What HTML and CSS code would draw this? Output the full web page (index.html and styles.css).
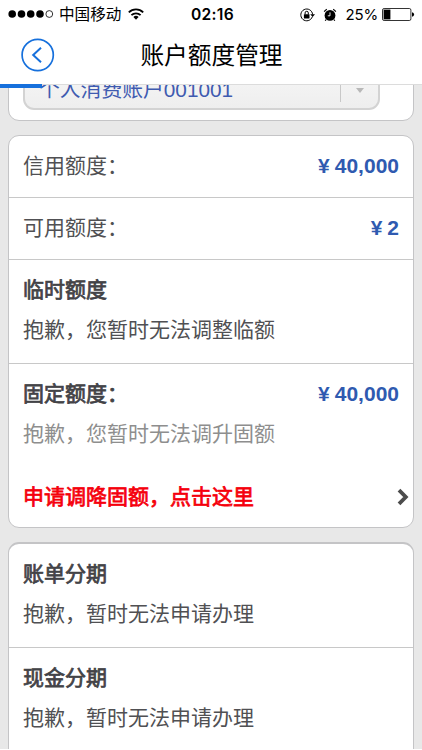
FILE: index.html
```html
<!DOCTYPE html>
<html lang="zh-CN">
<head>
<meta charset="utf-8">
<title>账户额度管理</title>
<link rel="stylesheet" href="styles.css">
</head>
<body>
<div class="screen">
  <header class="top">
    <div class="status">
      <div class="status-left">
        <svg class="signal" width="46" height="10" viewBox="0 0 46 10"><g fill="#000"><circle cx="4.2" cy="5" r="3.8"/><circle cx="13.5" cy="5" r="3.8"/><circle cx="22.7" cy="5" r="3.8"/><circle cx="32" cy="5" r="3.8"/></g><circle cx="41.3" cy="5" r="3.4" fill="none" stroke="#000" stroke-width=".8"/></svg>
        <span class="carrier">中国移动</span>
        <svg class="wifi" width="16" height="12" viewBox="0 0 16 12"><g fill="none" stroke="#000" stroke-width="1.8"><path d="M.8 4.4a10.2 10.2 0 0 1 14.4 0"/><path d="M3.4 7.2a6.5 6.5 0 0 1 9.2 0"/></g><path d="M5.4 9.1a3.7 3.7 0 0 1 5.2 0L8 11.8z"/></svg>
      </div>
      <span class="time">02:16</span>
      <div class="status-right">
        <svg width="15" height="14" viewBox="0 0 15 14"><path d="M12.3 8.8A5.9 5.9 0 1 1 12.6 6.5" fill="none" stroke="#000" stroke-width="1"/><path d="M10.2 6.2h4.8l-2.4 2.9z"/><rect x="3.9" y="6.2" width="5.6" height="4.2" rx=".4"/><path d="M5.1 6.4V4.9a1.6 1.6 0 0 1 3.2 0v1.5" fill="none" stroke="#000"/></svg>
        <svg class="alarm" width="14" height="14" viewBox="0 0 14 14"><circle cx="7" cy="7.4" r="5.4"/><path d="M1.2 3.6A8 8 0 0 1 3.8 1.2M12.8 3.6a8 8 0 0 0-2.6-2.4" fill="none" stroke="#000" stroke-width="1.2"/><path d="M3 11.6l-.8 1.2M11 11.6l.8 1.2" stroke="#000" stroke-width="1.1"/><path d="M7 4.4v3.4H4.8" fill="none" stroke="#fff" stroke-width=".9"/></svg>
        <span class="percent">25%</span>
        <svg class="battery" width="33" height="13" viewBox="0 0 33 13"><rect x=".5" y=".5" width="28.4" height="12" rx="1.6" fill="none" stroke="#000" stroke-width=".8"/><rect x="1.6" y="1.6" width="6.8" height="9.8"/><path d="M30 4.3q2.1.3 2.1 2.2T30 8.7z"/></svg>
      </div>
    </div>
    <div class="nav">
      <svg class="back" width="34" height="34" viewBox="0 0 34 34" fill="none" stroke="#1670dc"><circle cx="16.7" cy="17" r="15.6" stroke-width="1.7"/><path d="M20 9.8L12.2 17l7.8 7.2" stroke-width="2"/></svg>
      <h1>账户额度管理</h1>
    </div>
    <div class="progress"></div>
  </header>
  <main>
    <section class="card account">
      <div class="select"><span class="select-text">个人消费账户001001</span><span class="drop"><i></i></span></div>
    </section>
    <section class="card limits">
      <div class="row"><span>信用额度：</span><b class="money"><span class="yen">¥</span>40,000</b></div>
      <div class="row"><span>可用额度：</span><b class="money"><span class="yen">¥</span>2</b></div>
      <div class="block"><h2>临时额度</h2><p>抱歉，您暂时无法调整临额</p></div>
      <div class="block fixed">
        <div class="line"><h2>固定额度：</h2><b class="money"><span class="yen">¥</span>40,000</b></div>
        <p class="muted">抱歉，您暂时无法调升固额</p>
        <div class="line apply"><strong>申请调降固额，点击这里</strong><svg class="arrow" width="12" height="18" viewBox="0 0 12 18"><path d="M2 2.2L8.8 9 2 15.8" fill="none" stroke="#4c4c4c" stroke-width="3.8"/></svg></div>
      </div>
    </section>
    <section class="card installments">
      <div class="block"><h2>账单分期</h2><p>抱歉，暂时无法申请办理</p></div>
      <div class="block"><h2>现金分期</h2><p>抱歉，暂时无法申请办理</p></div>
    </section>
  </main>
</div>
</body>
</html>
```
FILE: styles.css
```css
* { box-sizing: border-box; }
body {
  margin: 0;
  background: #fff;
  color: #505053;
  font: 21px/40px "Liberation Sans", "Noto Sans CJK SC", sans-serif;
}
svg { display: block; flex: none; }
h1, h2, p { margin: 0; font-size: inherit; }
.screen { height: 749px; display: flex; flex-direction: column; overflow: hidden; background: #e8e8e8; }
.top { flex: none; position: relative; z-index: 1; height: 85px; background: #fff; border-bottom: 1px solid #dcdcdc; color: #000; }
.status {
  display: grid;
  grid-template-columns: 1fr auto 1fr;
  align-items: center;
  height: 28px;
  padding: 0 7px 0 8px;
  font-size: 15.6px;
  line-height: 28px;
}
.status-left, .status-right { display: flex; align-items: center; }
.status-left { padding-bottom: 1px; }
.carrier { margin-left: 5px; padding-top: 2px; line-height: 26px; }
.status-right { justify-content: flex-end; }
.wifi { margin-left: 7px; }
.time { margin-left: 2px; font: 600 15.6px/28px Inter, sans-serif; letter-spacing: .3px; }
.alarm { margin-left: 8px; }
.percent { margin: 0 4px 0 9px; font: 15px/28px Inter, sans-serif; letter-spacing: -.2px; }
.nav { display: grid; grid-template-columns: 34px 1fr 34px; align-items: center; height: 54px; padding: 0 20px 0 21px; }
.nav h1 { padding-top: 1px; font-size: 23.7px; font-weight: 400; text-align: center; }
.progress { position: absolute; left: 0; bottom: -4px; width: 42px; height: 4px; background: #1670dc; }
main { flex: 1; min-height: 0; padding: 0 8px; }
.card { background: #fff; border: 1px solid #c4c4c6; border-radius: 11px; overflow: hidden; }
.account { height: 72px; margin-top: -36px; padding: 0 33px 0 14px; }
.select { display: flex; height: 60px; border: 2px solid #d3d3d3; border-radius: 11px; background: linear-gradient(#fafafa, #eee); color: #3f5bb0; }
.select-text { flex: 1; padding: 18px 0 0 14px; font-size: 20.8px; }
.drop { width: 38px; height: 50px; border-left: 1px solid #c8c8c8; display: flex; align-items: flex-end; justify-content: center; }
.drop i { border: 4.5px solid transparent; border-top: 5px solid #b8b8b8; border-bottom: 0; margin-bottom: 9px; }
.limits { margin-top: 14px; height: 393px; }
.row { display: flex; justify-content: space-between; height: 62px; padding: 0 14px; line-height: 60px; border-bottom: 1px solid #c8c8c8; }
.money { color: #2f5ab0; }
.yen { margin-right: 5px; }
.block { height: 104px; padding: 10px 14px 0; border-bottom: 1px solid #c8c8c8; }
.block h2, .apply strong { font-weight: 400; -webkit-text-stroke: .75px currentColor; }
.block h2 { color: #434347; }
.fixed { height: auto; border: 0; }
.line { display: flex; justify-content: space-between; }
.muted { color: #8e8e8e; }
.apply { margin-top: 23px; margin-right: -10px; align-items: center; color: #f5000c; }
.installments { margin-top: 14px; height: 240px; border-top-width: 2px; }
```
